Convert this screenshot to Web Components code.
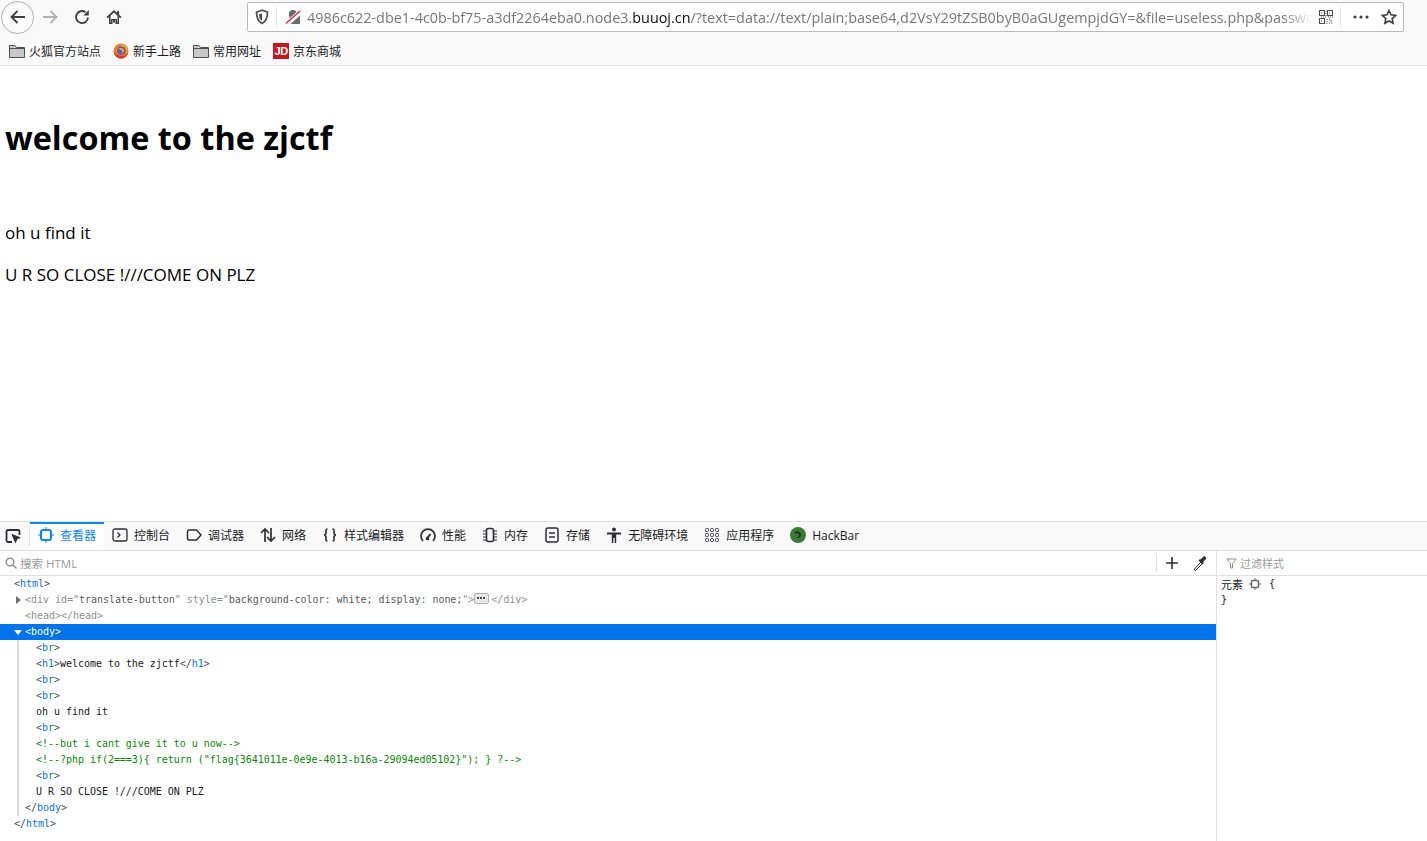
<!DOCTYPE html>
<html lang="zh-CN">
<head>
<meta charset="utf-8">
<title>welcome to the zjctf</title>
<style>
  html, body { margin: 0; height: 100%; }
  body {
    display: grid;
    grid-template-rows: 66px 455px 1fr;
    height: 841px;
    overflow: hidden;
    background: #fff;
    font-family: "Open Sans", "Noto Sans CJK SC", sans-serif;
  }
</style>
</head>
<body>
<browser-chrome></browser-chrome>
<page-view></page-view>
<dev-tools></dev-tools>

<script>
/* shared icon strings, every one drawn on a 16 box */
const ICONS = {
  folder: '<svg width="16" height="14" viewBox="0 0 16 14"><path d="M.5 1.500h5.500l1.500 2h8v10H.5z" fill="#c8c8c8" stroke="#4f4f4f"/><path d="M.5 4.500h15" stroke="#4f4f4f"/></svg>',
  firefox: '<svg width="16" height="16" viewBox="0 0 16 16"><circle cx="8" cy="8" r="7.500" fill="#f47a20"/><path d="M8 1.500a6 6 0 0 1 6.300 6.500c0 1-.3 2-.8 2.800C14 7 11 4 8 4.500z" fill="#ffb02e"/><circle cx="8.500" cy="7.500" r="4.300" fill="#4a5fc4"/><path d="M5 6c1.500-1.300 5-1.500 6 .8.800 2-1 3.700-3 3.500 1.500-.5 1.800-1.800 1-2.600C8 6.800 6.500 6.500 5 6z" fill="#f9a11b"/><path d="M.8 9c.8 4 4 6.500 7.200 6.500s6.300-2.300 7.200-6.300c-2 3.300-5 4.300-8 3.500S2.400 10.300.8 9z" fill="#e5352b"/></svg>',
  jd: '<svg width="16" height="16" viewBox="0 0 16 16"><rect width="16" height="16" fill="#c9151e"/></svg>',
  inspect: '<svg width="16" height="16" viewBox="0 0 16 16" fill="none" stroke="#2f2f33" stroke-width="1.800"><path d="M7 14H3a1.500 1.500 0 0 1-1.500-1.500v-9A1.500 1.500 0 0 1 3 2h10a1.500 1.500 0 0 1 1.500 1.500V7"/><path d="M7 6.500l8 3.200-3.200 1.300-1.300 3.500z" fill="#2f2f33" stroke-width="1"/></svg>',
  inspector: '<svg width="16" height="16" viewBox="0 0 16 16" fill="none" stroke="#0a84ff"><rect x="3" y="3" width="10" height="10" rx="2" stroke-width="2"/><path d="M8 0v3M8 13v3M0 8h3M13 8h3" stroke-width="1"/></svg>',
  console: '<svg width="16" height="16" viewBox="0 0 16 16" fill="none" stroke="#2f2f33" stroke-width="1.300"><rect x="1" y="2" width="14" height="12" rx="2"/><path d="M5.500 5.500L8 8l-2.500 2.500"/></svg>',
  debugger: '<svg width="16" height="16" viewBox="0 0 16 16" fill="none" stroke="#2f2f33" stroke-width="1.500"><path d="M3 3h7.500L15 8l-4.500 5H3a1.500 1.500 0 0 1-1.500-1.500v-7A1.500 1.500 0 0 1 3 3z"/></svg>',
  network: '<svg width="16" height="16" viewBox="0 0 16 16" fill="none" stroke="#2f2f33" stroke-width="1.700"><path d="M5 15V2M1 6l4-4 4 4M11 1v13M7 10l4 4 4-4"/></svg>',
  style: '<svg width="16" height="16" viewBox="0 0 16 16" fill="none" stroke="#2f2f33" stroke-width="1.600"><path d="M5.500 2C3.500 2 4 3.500 4 5.500S3.500 8 2 8c1.500 0 2 .5 2 2.500S3.500 14 5.500 14M10.500 2c2 0 1.500 1.500 1.500 3.500S12.500 8 14 8c-1.500 0-2 .5-2 2.500s.5 3.500-1.500 3.500"/></svg>',
  perf: '<svg width="16" height="16" viewBox="0 0 16 16" fill="none" stroke="#2f2f33" stroke-width="1.700"><path d="M3 14a7 7 0 1 1 10 0"/><path d="M7 11.500L10.500 7" stroke-width="2"/><circle cx="7.500" cy="11.500" r="1" fill="#2f2f33"/></svg>',
  memory: '<svg width="16" height="16" viewBox="0 0 16 16" fill="none" stroke="#2f2f33"><rect x="4.500" y="1.500" width="7" height="13" rx="2" stroke-width="1.600"/><path d="M1 4h3M1 7h3M1 10h3M1 13h3M12 4h3M12 7h3M12 10h3M12 13h3" stroke-width="1"/></svg>',
  storage: '<svg width="16" height="16" viewBox="0 0 16 16" fill="none" stroke="#2f2f33" stroke-width="1.500"><rect x="2" y="1" width="12" height="14" rx="2"/><path d="M5 6h6M5 10h6"/></svg>',
  access: '<svg width="16" height="16" viewBox="0 0 16 16"><circle cx="8" cy="2.500" r="2" fill="#2f2f33"/><path d="M1 5.500h14v2H10.200V16H8.700v-5H7.300v5H5.800V7.500H1z" fill="#2f2f33"/></svg>',
  apps: '<svg width="16" height="16" viewBox="0 0 16 16" fill="none" stroke="#2f2f33"><rect x="1.500" y="1.500" width="3" height="3" rx="1"/><rect x="6.500" y="1.500" width="3" height="3" rx="1"/><rect x="11.500" y="1.500" width="3" height="3" rx="1"/><rect x="1.500" y="6.500" width="3" height="3" rx="1"/><rect x="6.500" y="6.500" width="3" height="3" rx="1"/><rect x="11.500" y="6.500" width="3" height="3" rx="1"/><rect x="1.500" y="11.500" width="3" height="3" rx="1"/><rect x="6.500" y="11.500" width="3" height="3" rx="1"/><rect x="11.500" y="11.500" width="3" height="3" rx="1"/></svg>',
  hackbar: '<svg width="16" height="16" viewBox="0 0 16 16"><circle cx="8" cy="8" r="8" fill="#3c7a35"/><path d="M5 4.500c3-1 6 .5 6 3 0 3-3 4-5.500 3.500 2 0 3.500-1 3.500-2.500S7.500 6 5 6.500z" fill="#17351a"/></svg>'
};

class NavButton extends HTMLElement {
  constructor() {
    super();
    const shadowRoot = this.attachShadow({ mode: 'open' });
    shadowRoot.innerHTML = `
    <style>
      :host { display: flex; align-items: center; justify-content: center; width: 32px; height: 32px; flex: none; }
      :host([round]) { width: 31px; height: 31px; border: 1px solid #b1b1b3; border-radius: 50%; background: #fbfbfb; margin-left: 1px; }
    </style>
    <slot></slot>`;
  }
}
customElements.define('nav-button', NavButton);

class BookmarkItem extends HTMLElement {
  constructor() {
    super();
    const shadowRoot = this.attachShadow({ mode: 'open' });
    shadowRoot.innerHTML = `
    <style>
      :host { display: flex; align-items: center; gap: 4px; font-size: 12px; color: #1a1a1a; white-space: nowrap; }
      span { display: flex; }
      b { position: absolute; width: 16px; text-align: center; color: #fff; font: 700 11px/16px "Liberation Sans", sans-serif; letter-spacing: -.5px; }
    </style>
    <span>${ICONS[this.getAttribute('icon')]}</span><slot></slot>`;
    if (this.getAttribute('icon') === 'jd') {
      const badge = document.createElement('b');
      badge.textContent = 'JD';
      shadowRoot.querySelector('span').prepend(badge);
    }
  }
}
customElements.define('bookmark-item', BookmarkItem);

class BrowserChrome extends HTMLElement {
  constructor() {
    super();
    const shadowRoot = this.attachShadow({ mode: 'open' });
    shadowRoot.innerHTML = `
    <style>
      :host { display: flex; flex-direction: column; background: #f9f9fa; border-bottom: 1px solid #e1e1e2; font-family: "Open Sans", "Noto Sans CJK SC", sans-serif; }
      .nav { display: flex; align-items: center; height: 34px; }
      .url {
        margin-left: 117px; width: 1157px; height: 30px; flex: none; box-sizing: border-box;
        display: flex; align-items: center; background: #fff; border: 1px solid #b9b9bb; border-radius: 2px;
      }
      .url .shield { width: 28px; display: flex; justify-content: center; border-right: 1px solid #e4e4e5; height: 20px; align-items: center; flex: none; }
      .url .lock { margin-left: 8px; width: 16px; display: flex; flex: none; }
      .text {
        margin-left: 6px; width: 1006px; flex: none; white-space: nowrap; font-size: 14.4px; color: #777;
        -webkit-mask-image: linear-gradient(to right, #000 975px, transparent);
      }
      .text b { font-weight: 400; color: #0c0c0d; }
      .qr { margin-left: 6px; display: flex; flex: none; }
      .sep { width: 1px; height: 20px; background: #e4e4e5; margin-left: 7px; flex: none; }
      .more { margin-left: 12px; display: flex; flex: none; }
      .star { margin-left: 12px; display: flex; flex: none; }
      .marks { display: flex; align-items: center; gap: 12px; height: 31px; padding: 2px 0 0 9px; box-sizing: border-box; }
    </style>
    <div class="nav">
      <nav-button round><svg width="18" height="18" viewBox="0 0 18 18" fill="none" stroke="#3f3f42" stroke-width="1.800"><path d="M16 9H2.500M8.500 3L2.500 9l6 6"/></svg></nav-button>
      <nav-button><svg width="18" height="18" viewBox="0 0 18 18" fill="none" stroke="#b1b1b3" stroke-width="1.800"><path d="M2 9h13.500M9.500 3l6 6-6 6"/></svg></nav-button>
      <nav-button><svg width="16" height="16" viewBox="0 0 16 16" fill="none" stroke="#3f3f42" stroke-width="1.900"><path d="M14 8.500A6 6 0 1 1 11.500 3.200"/><path d="M14.800 1v5.500H9.300z" fill="#3f3f42" stroke="none"/></svg></nav-button>
      <nav-button><svg width="16" height="16" viewBox="0 0 16 16"><path d="M8 1L.5 8l1.200 1.200L3 8v7h3.500v-4h3v4H13V8l1.300 1.200L15.500 8 13 5.600V2h-2v1.800z" fill="#3f3f42"/><path d="M8 3.500L4.500 6.800v6.700h.5v-3.500h6v3.500h.5V6.800z" fill="#f9f9fa"/><rect x="7" y="11" width="2" height="2.500" fill="#3f3f42"/></svg></nav-button>
      <div class="url">
        <span class="shield"><svg width="14" height="16" viewBox="0 0 14 16" fill="none" stroke="#4a4a4f" stroke-width="1.700"><path d="M7 1.200L1.500 3c0 6 1.500 9.500 5.500 11.500C11 12.500 12.500 9 12.500 3z"/><path d="M7 4.500L4 5.500c0 3 .8 5 3 6.300z" fill="#4a4a4f" stroke="none"/></svg></span>
        <span class="lock"><svg width="16" height="16" viewBox="0 0 16 16"><path d="M4 7V5a4 4 0 0 1 7.500-2L4.500 9.500V7zM15 6.500V15H5.500z" fill="#6a6a6e"/><path d="M1 14.500L15 2" stroke="#e22850" stroke-width="1.600"/></svg></span>
        <span class="text">4986c622-dbe1-4c0b-bf75-a3df2264eba0.node3.<b>buuoj.cn</b>/?text=data://text/plain;base64,d2VsY29tZSB0byB0aGUgempjdGY=&amp;file=useless.php&amp;passwo</span>
        <span class="qr"><svg width="14" height="14" viewBox="0 0 14 14" fill="none" stroke="#4a4a4f"><rect x=".5" y=".5" width="5" height="5"/><rect x="8.500" y=".5" width="5" height="5"/><rect x=".5" y="8.500" width="5" height="5"/><path d="M2 3h2M10 3h2M2 11h2M7 1v6H1M9 7h5M8 9v5M10 9h1v2h3M10 13h4" stroke-dasharray="1 1"/></svg></span>
        <span class="sep"></span>
        <span class="more"><svg width="16" height="4" viewBox="0 0 16 4" fill="#3f3f42"><circle cx="2" cy="2" r="1.600"/><circle cx="8" cy="2" r="1.600"/><circle cx="14" cy="2" r="1.600"/></svg></span>
        <span class="star"><svg width="16" height="16" viewBox="0 0 16 16" fill="none" stroke="#3f3f42" stroke-width="1.600"><path d="M8 1.500l2 4.300 4.700.6-3.500 3.200.9 4.700L8 12l-4.100 2.300.9-4.700L1.300 6.400 6 5.800z"/></svg></span>
      </div>
    </div>
    <div class="marks">
      <bookmark-item icon="folder">火狐官方站点</bookmark-item>
      <bookmark-item icon="firefox">新手上路</bookmark-item>
      <bookmark-item icon="folder">常用网址</bookmark-item>
      <bookmark-item icon="jd">京东商城</bookmark-item>
    </div>`;
  }
}
customElements.define('browser-chrome', BrowserChrome);

class PageView extends HTMLElement {
  constructor() {
    super();
    const shadowRoot = this.attachShadow({ mode: 'open' });
    shadowRoot.innerHTML = `
    <style>
      :host { display: block; padding: 50px 0 0 5px; color: #000; overflow: hidden; background: #fff; font-family: "Open Sans", sans-serif; }
      h1 { margin: 0; font-size: 32.4px; line-height: 42px; font-weight: 700; }
      p { margin: 0; font-size: 17px; line-height: 22px; }
      .one { margin-top: 64px; }
      .two { margin-top: 20px; }
    </style>
    <h1>welcome to the zjctf</h1>
    <p class="one">oh u find it</p>
    <p class="two">U R SO CLOSE !///COME ON PLZ</p>`;
  }
}
customElements.define('page-view', PageView);

class ToolTab extends HTMLElement {
  constructor() {
    super();
    const shadowRoot = this.attachShadow({ mode: 'open' });
    shadowRoot.innerHTML = `
    <style>
      :host { display: flex; align-items: center; gap: 6px; padding: 0 8px 2px; height: 28px; flex: none; box-sizing: border-box; font-size: 12px; color: #18191a; white-space: nowrap; }
      :host([selected]) { color: #0a84ff; box-shadow: inset 0 2px 0 #0a84ff; background: #fff; }
      span { display: flex; }
    </style>
    <span>${ICONS[this.getAttribute('icon')]}</span><slot></slot>`;
  }
}
customElements.define('tool-tab', ToolTab);

class DomTree extends HTMLElement {
  constructor() {
    super();
    const tag = (name) => `<i>&lt;</i><u>${name}</u><i>&gt;</i>`;
    const end = (name) => `<i>&lt;/</i><u>${name}</u><i>&gt;</i>`;
    const shadowRoot = this.attachShadow({ mode: 'open' });
    shadowRoot.innerHTML = `
    <style>
      :host { display: block; font: 10px/16px "DejaVu Sans Mono", monospace; letter-spacing: -.03px; color: #18191a; overflow: hidden; }
      i { font-style: normal; color: #4a4a4f; }
      u { text-decoration: none; color: #0074e8; }
      .row { height: 16px; white-space: pre; }
      .root { padding-left: 14px; }
      .l1 { padding-left: 25px; }
      .kids { margin-left: 17px; border-left: 2px solid #dcdcdc; }
      .kids .row { padding-left: 17px; }
      .kids .last { padding-left: 6px; }
      .dim { color: #8f8f92; position: relative; }
      .dim i, .dim u { color: #8f8f92; }
      .dim .tw { position: absolute; left: 16px; top: 4px; width: 0; height: 0; border: 4px solid transparent; border-left: 5px solid #6d6d70; border-right: 0; }
      .dim .val { color: #5a5a5e; }
      .dots { display: inline-block; width: 13px; height: 9px; border: 1px solid #b1b1b3; border-radius: 2px; background: #e8e8e9; vertical-align: -1px; margin-right: 2px; position: relative; }
      .dots::after { content: ""; position: absolute; left: 2px; top: 3px; width: 2px; height: 2px; background: #4a4a4f; box-shadow: 3px 0 #4a4a4f, 6px 0 #4a4a4f; }
      .sel { background: #0074e8; color: #fff; position: relative; }
      .sel i, .sel u { color: #fff; }
      .sel .tw { position: absolute; left: 14px; top: 6px; width: 0; height: 0; border: 4px solid transparent; border-top: 5px solid #fff; border-bottom: 0; }
      .cm { color: #058b00; }
    </style>
    <div class="row root">${tag('html')}</div>
    <div class="row l1 dim"><span class="tw"></span><i>&lt;</i>div id="<span class="val">translate-button</span>" style="<span class="val">background-color: white; display: none;</span>"&gt;<span class="dots"></span>&lt;/div&gt;</div>
    <div class="row l1 dim"><i>&lt;</i>head&gt;&lt;/head&gt;</div>
    <div class="row l1 sel"><span class="tw"></span>${tag('body')}</div>
    <div class="kids">
      <div class="row">${tag('br')}</div>
      <div class="row">${tag('h1')}welcome to the zjctf${end('h1')}</div>
      <div class="row">${tag('br')}</div>
      <div class="row">${tag('br')}</div>
      <div class="row">oh u find it</div>
      <div class="row">${tag('br')}</div>
      <div class="row cm">&lt;!--but i cant give it to u now--&gt;</div>
      <div class="row cm">&lt;!--?php if(2===3){ return ("flag{3641011e-0e9e-4013-b16a-29094ed05102}"); } ?--&gt;</div>
      <div class="row">${tag('br')}</div>
      <div class="row">U R SO CLOSE !///COME ON PLZ</div>
      <div class="row last">${end('body')}</div>
    </div>
    <div class="row root">${end('html')}</div>`;
  }
}
customElements.define('dom-tree', DomTree);

class RulesPane extends HTMLElement {
  constructor() {
    super();
    const shadowRoot = this.attachShadow({ mode: 'open' });
    shadowRoot.innerHTML = `
    <style>
      :host { display: flex; flex-direction: column; border-left: 1px solid #e0e0e2; font-size: 11px; }
      .filter { display: flex; align-items: center; gap: 3px; height: 24px; padding-left: 9px; border-bottom: 1px solid #e0e0e2; color: #9a9a9c; }
      .rule { padding-left: 4px; line-height: 16px; color: #18191a; font-family: "Noto Sans CJK SC", sans-serif; }
      .head { display: flex; align-items: center; gap: 6px; height: 16px; }
      .brace { font-family: "DejaVu Sans Mono", monospace; font-size: 10px; color: #18191a; margin-left: 2px; }
      svg { display: block; }
    </style>
    <div class="filter">
      <svg width="11" height="11" viewBox="0 0 11 11" fill="none" stroke="#8f8f92"><path d="M.8 1h9.400L6.500 5.500V10h-2V5.500z"/></svg>
      <span>过滤样式</span>
    </div>
    <div class="rule">
      <div class="head">元素
        <svg width="12" height="12" viewBox="0 0 12 12" fill="none" stroke="#6d6d70"><rect x="2.500" y="2.500" width="7" height="7" rx="1" stroke-width="1.600"/><path d="M6 0v2M6 10v2M0 6h2M10 6h2"/></svg>
        <span class="brace">{</span>
      </div>
      <div class="brace" style="margin:0">}</div>
    </div>`;
  }
}
customElements.define('rules-pane', RulesPane);

class DevTools extends HTMLElement {
  constructor() {
    super();
    const shadowRoot = this.attachShadow({ mode: 'open' });
    shadowRoot.innerHTML = `
    <style>
      :host { display: flex; flex-direction: column; min-height: 0; background: #fff; font-family: "Open Sans", "Noto Sans CJK SC", sans-serif; border-top: 1px solid #e0e0e2; }
      .tabs { display: flex; align-items: center; height: 28px; background: #f9f9fa; border-bottom: 1px solid #e0e0e2; flex: none; }
      .pick { width: 30px; box-sizing: border-box; padding-left: 5px; height: 20px; display: flex; align-items: center; border-right: 1px solid #e0e0e2; flex: none; }
      .panes { flex: 1; display: grid; grid-template-columns: 1216px 1fr; min-height: 0; }
      .left { display: flex; flex-direction: column; min-width: 0; }
      .search { display: flex; align-items: center; height: 24px; border-bottom: 1px solid #e0e0e2; padding-left: 5px; font-size: 11.5px; color: #9a9a9c; flex: none; }
      .search svg { display: block; margin-right: 3px; }
      .search .grow { flex: 1; }
      .search .sep { width: 1px; height: 18px; background: #e0e0e2; }
      .search .act { display: flex; margin-left: 8px; }
    </style>
    <div class="tabs">
      <div class="pick">${ICONS.inspect}</div>
      <tool-tab icon="inspector" selected>查看器</tool-tab>
      <tool-tab icon="console">控制台</tool-tab>
      <tool-tab icon="debugger">调试器</tool-tab>
      <tool-tab icon="network">网络</tool-tab>
      <tool-tab icon="style">样式编辑器</tool-tab>
      <tool-tab icon="perf">性能</tool-tab>
      <tool-tab icon="memory">内存</tool-tab>
      <tool-tab icon="storage">存储</tool-tab>
      <tool-tab icon="access">无障碍环境</tool-tab>
      <tool-tab icon="apps">应用程序</tool-tab>
      <tool-tab icon="hackbar">HackBar</tool-tab>
    </div>
    <div class="panes">
      <div class="left">
        <div class="search">
          <svg width="12" height="12" viewBox="0 0 12 12" fill="none" stroke="#8f8f92" stroke-width="1.400"><circle cx="5" cy="5" r="3.800"/><path d="M8 8l3.500 3.500"/></svg>
          <span class="grow">搜索 HTML</span>
          <span class="sep"></span>
          <span class="act"><svg width="14" height="14" viewBox="0 0 14 14" stroke="#2f2f33" stroke-width="1.600"><path d="M7 1v12M1 7h12"/></svg></span>
          <span class="act" style="margin-left:10px;margin-right:5px"><svg width="16" height="16" viewBox="0 0 16 16"><path d="M2 14.500L9 7l1.500 1.500-7 7z" fill="#fff" stroke="#2f2f33"/><path d="M8.500 4.500l3-3c1-1 3.500 1.500 2.500 2.500l-3 3 1 1-1.500 1.500-4-4L8 4z" fill="#2f2f33"/></svg></span>
        </div>
        <dom-tree></dom-tree>
      </div>
      <rules-pane></rules-pane>
    </div>`;
  }
}
customElements.define('dev-tools', DevTools);
</script>
</body>
</html>
